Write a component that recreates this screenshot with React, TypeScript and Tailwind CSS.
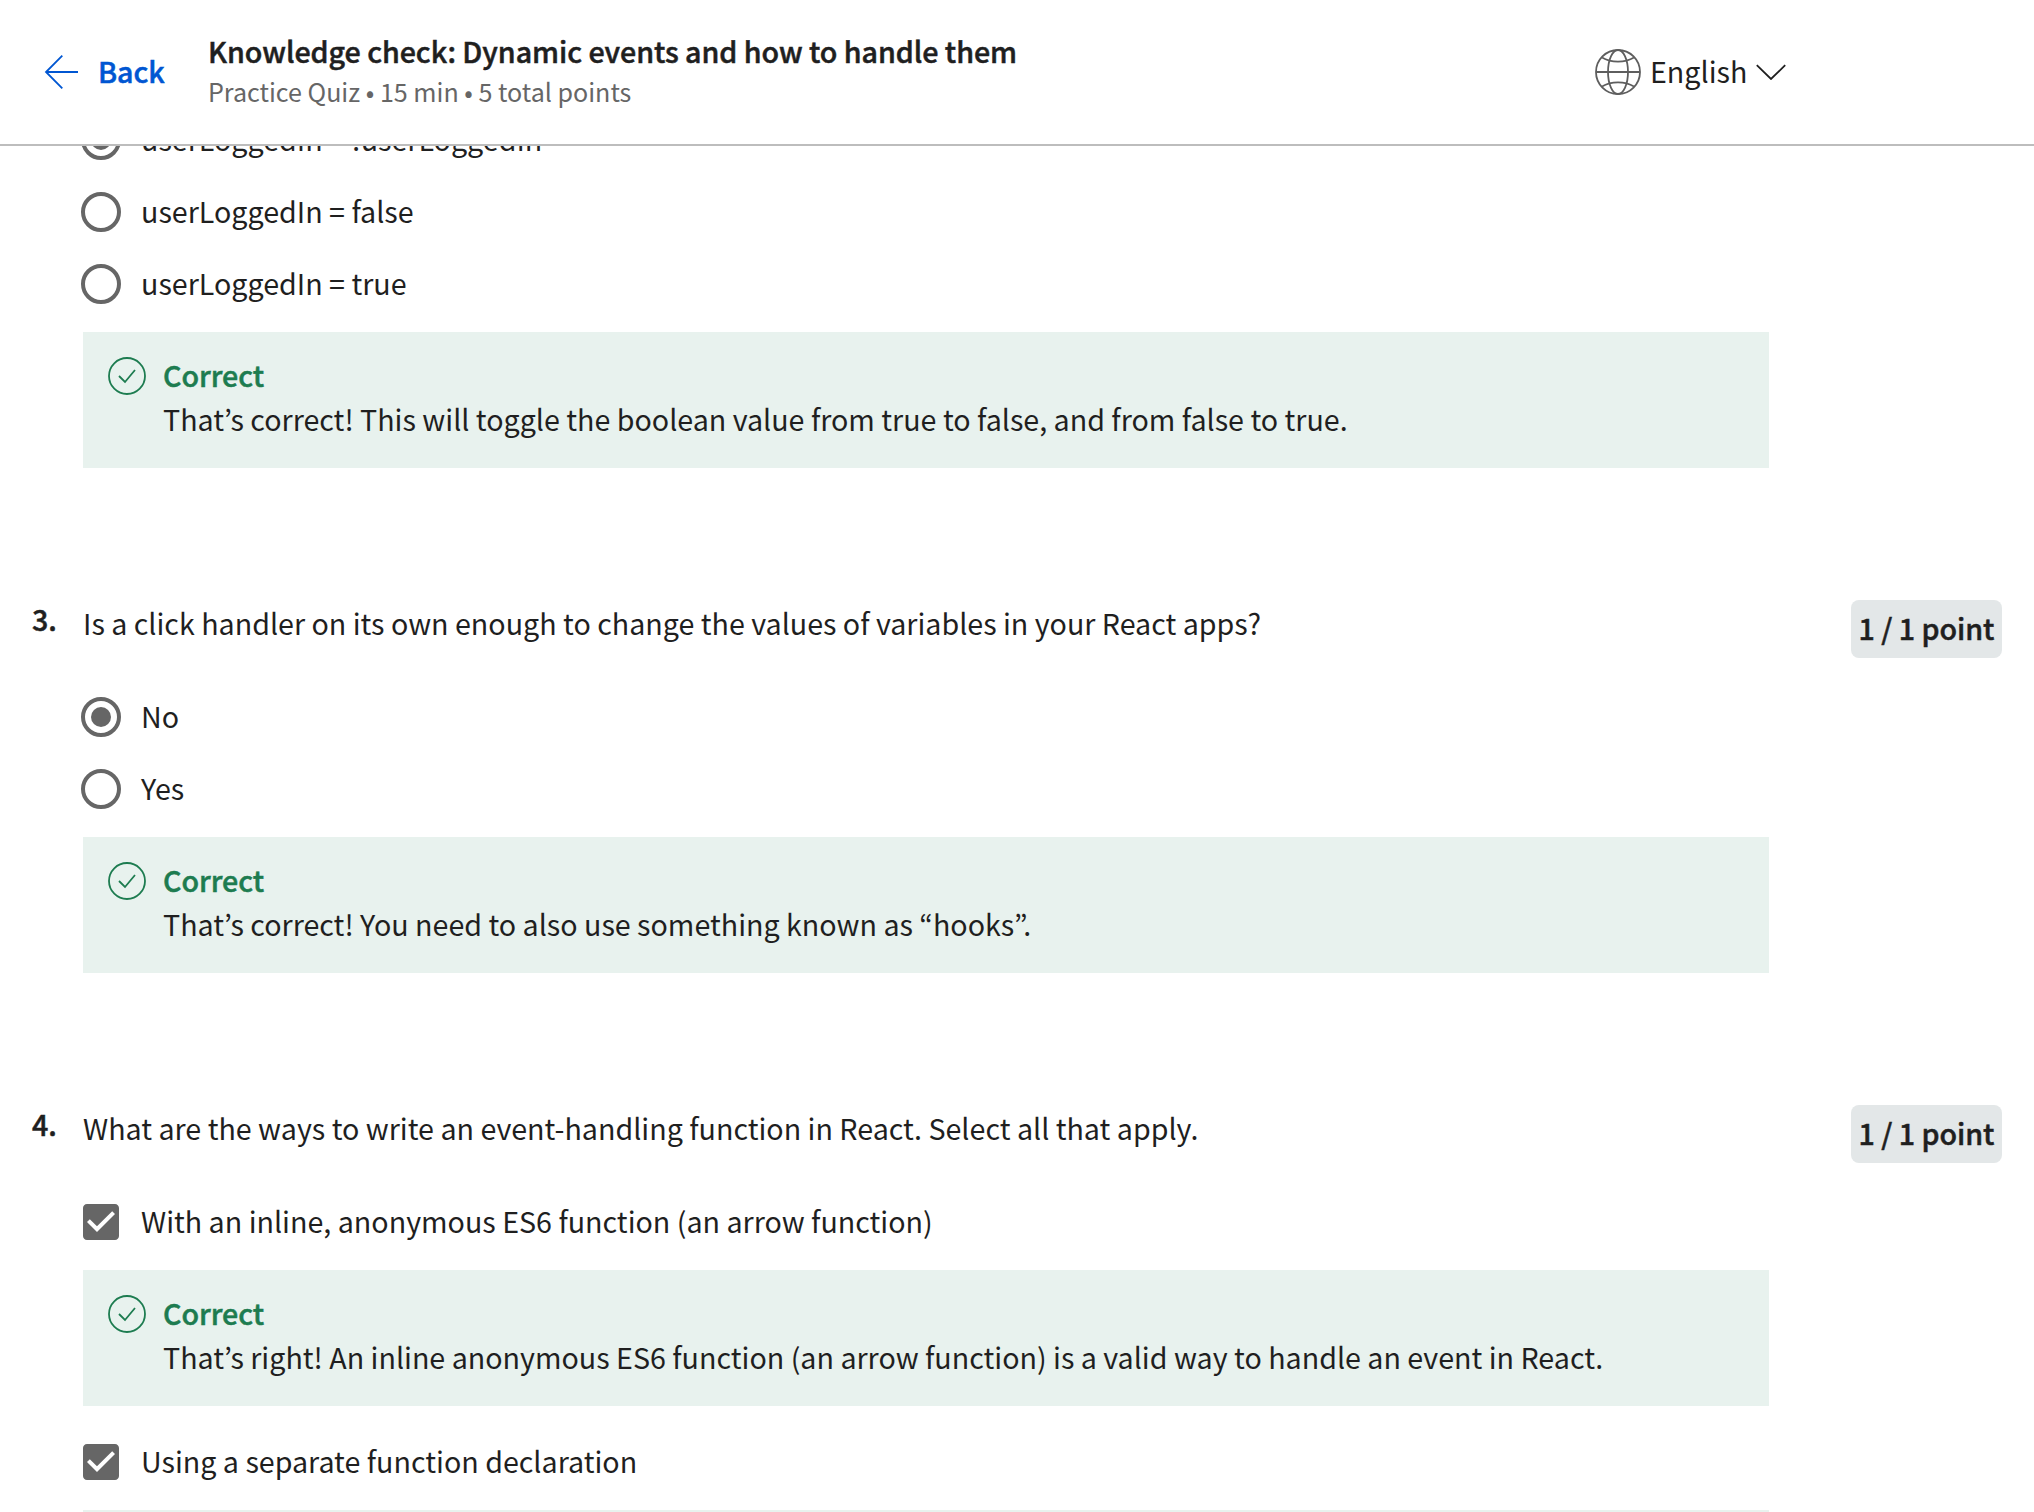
import type { ReactNode } from "react";

type OptionData = {
  label: string;
  selected: boolean;
  feedback?: string;
};

type QuestionData = {
  number: string;
  prompt: string;
  kind: "radio" | "checkbox";
  options: OptionData[];
  feedback?: string;
};

const questions: QuestionData[] = [
  {
    number: "3.",
    prompt: "Is a click handler on its own enough to change the values of variables in your React apps?",
    kind: "radio",
    options: [
      { label: "No", selected: true },
      { label: "Yes", selected: false },
    ],
    feedback: "That’s correct! You need to also use something known as “hooks”.",
  },
  {
    number: "4.",
    prompt: "What are the ways to write an event-handling function in React. Select all that apply.",
    kind: "checkbox",
    options: [
      {
        label: "With an inline, anonymous ES6 function (an arrow function)",
        selected: true,
        feedback:
          "That’s right! An inline anonymous ES6 function (an arrow function) is a valid way to handle an event in React.",
      },
      { label: "Using a separate function declaration", selected: true, feedback: "" },
    ],
  },
];

function Strong({ children, className = "" }: { children: ReactNode; className?: string }) {
  return (
    <span className={`font-medium tracking-[-0.04px] [-webkit-text-stroke:0.5px] ${className}`}>{children}</span>
  );
}

function RadioIcon({ selected }: { selected: boolean }) {
  return (
    <svg className="size-12 shrink-0" viewBox="0 0 24 24" fill="none">
      <circle cx="12" cy="12" r="9" stroke="#666" strokeWidth="2" />
      {selected && <circle cx="12" cy="12" r="5" fill="#666" />}
    </svg>
  );
}

function CheckboxIcon() {
  return (
    <svg className="size-12 shrink-0" viewBox="0 0 24 24" fill="#666">
      <path d="M19 3H5c-1.11 0-2 .9-2 2v14c0 1.1.89 2 2 2h14c1.11 0 2-.9 2-2V5c0-1.1-.89-2-2-2zm-9 14l-5-5 1.41-1.41L10 14.17l7.59-7.59L19 8l-9 9z" />
    </svg>
  );
}

function Option({ kind, label, selected }: { kind: "radio" | "checkbox"; label: string; selected: boolean }) {
  return (
    <label className="-ml-1.5 flex h-[72px] items-center gap-4">
      {kind === "radio" ? <RadioIcon selected={selected} /> : <CheckboxIcon />}
      <span className="pb-[3px]">{label}</span>
    </label>
  );
}

function Feedback({ text }: { text: string }) {
  return (
    <div className="mt-3 flex h-[136px] w-[1686px] gap-4 bg-[#e8f2ee] pl-6">
      {text && (
        <>
          <svg className="mt-6 size-10 shrink-0" viewBox="0 0 40 40" fill="none" stroke="#1d7c50" strokeWidth="1.8">
            <circle cx="20" cy="20" r="18" />
            <path d="M12 20l6 6 10-12" />
          </svg>
          <div className="pt-[22px]">
            <p className="text-[#1d7c50]">
              <Strong>Correct</Strong>
            </p>
            <p className="mt-[3px]">{text}</p>
          </div>
        </>
      )}
    </div>
  );
}

function Question({ number, prompt, kind, options, feedback }: QuestionData) {
  return (
    <section className="mt-[130px] grid grid-cols-[51px_1fr] pl-8">
      <Strong>{number}</Strong>
      <div>
        <div className="flex h-[83px] items-start justify-between pr-8">
          <p className="mt-1">{prompt}</p>
          <div className="mt-0.5 h-[58px] w-[151px] rounded-lg bg-[#e3e7e8] pt-[7px] text-center">
            <Strong>1 / 1 point</Strong>
          </div>
        </div>
        {options.map((o, i) => (
          <div key={o.label} className={kind === "checkbox" && i > 0 ? "mt-5" : ""}>
            <Option kind={kind} label={o.label} selected={o.selected} />
            {o.feedback !== undefined && <Feedback text={o.feedback} />}
          </div>
        ))}
        {feedback && <Feedback text={feedback} />}
      </div>
    </section>
  );
}

function Header() {
  return (
    <header className="flex h-[146px] shrink-0 items-start border-b-2 border-[#bdbdbd] pl-11">
      <a className="flex h-36 w-[164px] items-center gap-[18px] text-[#0056d2]">
        <svg className="size-9 shrink-0" viewBox="0 0 36 36" fill="none" stroke="currentColor" strokeWidth="1.8">
          <path d="M18.3 1.7L2 18l16.3 16.3M2 18h32" />
        </svg>
        <Strong className="pb-[3px]">Back</Strong>
      </a>
      <div className="pt-[30px]">
        <h1>
          <Strong>Knowledge check: Dynamic events and how to handle them</Strong>
        </h1>
        <p className="mt-0.5 text-[25.07px] leading-9 text-[#666]">Practice Quiz • 15 min • 5 total points</p>
      </div>
      <div className="mr-[248px] ml-auto flex h-36 items-center">
        <svg className="mr-2 size-12 shrink-0" viewBox="0 0 48 48" fill="none" stroke="#5e5e5e" strokeWidth="1.8">
          <circle cx="24" cy="24" r="22" />
          <ellipse cx="24" cy="24" rx="10" ry="22" />
          <path d="M2 24h44M8 9.5C17 15 31 15 40 9.5M8 38.5C17 33 31 33 40 38.5" />
        </svg>
        <span className="w-[106px] pb-[3px]">English</span>
        <svg className="h-4 w-[30px] shrink-0" viewBox="0 0 30 16" fill="none" stroke="currentColor" strokeWidth="1.8">
          <path d="M0.8 1.2L15 15 29.2 1.2" />
        </svg>
      </div>
    </header>
  );
}

export default function App() {
  return (
    <div className="flex h-screen flex-col overflow-hidden bg-white font-['Noto_Sans_CJK_KR','Noto_Sans',sans-serif] text-[28.65px] leading-[41px] whitespace-nowrap text-[#1f1f1f]">
      <Header />
      <main className="min-h-0 flex-1 overflow-hidden">
        <section className="-mt-[42px] pl-[83px]">
          <Option kind="radio" label="userLoggedIn = !userLoggedIn" selected />
          <Option kind="radio" label="userLoggedIn = false" selected={false} />
          <Option kind="radio" label="userLoggedIn = true" selected={false} />
          <Feedback text="That’s correct! This will toggle the boolean value from true to false, and from false to true." />
        </section>
        {questions.map((q) => (
          <Question key={q.number} {...q} />
        ))}
      </main>
    </div>
  );
}
